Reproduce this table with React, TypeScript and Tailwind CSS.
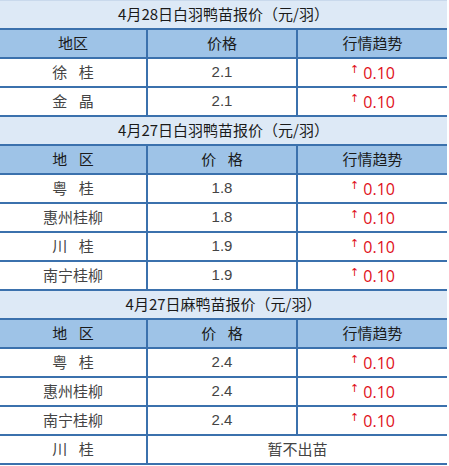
import React from "react";

type Row = { area: string; price: string; trend?: string };

const sections: { title: string; head: string[]; rows: Row[]; note?: { area: string; text: string } }[] = [
  {
    title: "4月28日白羽鸭苗报价（元/羽）",
    head: ["地区", "价格", "行情趋势"],
    rows: [
      { area: "徐 桂", price: "2.1", trend: "0.10" },
      { area: "金 晶", price: "2.1", trend: "0.10" },
    ],
  },
  {
    title: "4月27日白羽鸭苗报价（元/羽）",
    head: ["地 区", "价 格", "行情趋势"],
    rows: [
      { area: "粤 桂", price: "1.8", trend: "0.10" },
      { area: "惠州桂柳", price: "1.8", trend: "0.10" },
      { area: "川 桂", price: "1.9", trend: "0.10" },
      { area: "南宁桂柳", price: "1.9", trend: "0.10" },
    ],
  },
  {
    title: "4月27日麻鸭苗报价（元/羽）",
    head: ["地 区", "价 格", "行情趋势"],
    rows: [
      { area: "粤 桂", price: "2.4", trend: "0.10" },
      { area: "惠州桂柳", price: "2.4", trend: "0.10" },
      { area: "南宁桂柳", price: "2.4", trend: "0.10" },
    ],
    note: { area: "川 桂", text: "暂不出苗" },
  },
];

const cjk = { fontFamily: '"Noto Sans CJK SC", "Noto Sans", sans-serif' };

export default function App() {
  return (
    <div className="w-[449px] h-[466px] bg-white">
      <div className="w-[447px] border-t border-[#c9d9ec]" style={cjk}>
        {sections.map((s) => (
          <div key={s.title}>
            {/* title row */}
            <div className="h-[29px] flex items-center justify-center bg-[#dde9f6] border-b-2 border-[#3b71ad] text-[15px] text-[#1a1a1a] whitespace-pre">
              {s.title}
            </div>
            {/* header row */}
            <div className="h-[29px] grid grid-cols-[148px_150px_149px] bg-[#9ec3e7] border-b-2 border-[#3b71ad] text-[15px] text-[#1a1a1a] [word-spacing:8px]">
              {s.head.map((h, i) => (
                <div
                  key={i}
                  className={`flex items-center justify-center whitespace-pre ${i < 2 ? "border-r-2 border-[#3b71ad]" : ""}`}
                >
                  {h}
                </div>
              ))}
            </div>
            {s.rows.map((r, i) => (
              <div
                key={i}
                className="h-[29px] grid grid-cols-[148px_150px_149px] border-b-2 border-[#3b71ad] text-[15px] text-[#444]"
              >
                <div className="flex items-center justify-center whitespace-pre border-r-2 border-[#3b71ad] [word-spacing:8px]">
                  {r.area}
                </div>
                <div
                  className="flex items-center justify-center border-r-2 border-[#3b71ad]"
                  style={{ fontFamily: '"Liberation Sans", Arial, sans-serif' }}
                >
                  {r.price}
                </div>
                <div className="flex items-center justify-center text-[#e0101a]">
                  <span className="text-[11px] mr-[4px] -mt-[5px]" style={{ fontFamily: '"DejaVu Sans", sans-serif' }}>
                    ↑
                  </span>
                  <span className="text-[16px] font-medium" style={{ fontFamily: '"Open Sans", Lato, sans-serif' }}>
                    {r.trend}
                  </span>
                </div>
              </div>
            ))}
            {s.note && (
              <div className="h-[29px] grid grid-cols-[148px_299px] border-b-2 border-[#3b71ad] text-[15px] text-[#444]">
                <div className="flex items-center justify-center whitespace-pre border-r-2 border-[#3b71ad] [word-spacing:8px]">
                  {s.note.area}
                </div>
                <div className="flex items-center justify-center">{s.note.text}</div>
              </div>
            )}
          </div>
        ))}
      </div>
    </div>
  );
}
